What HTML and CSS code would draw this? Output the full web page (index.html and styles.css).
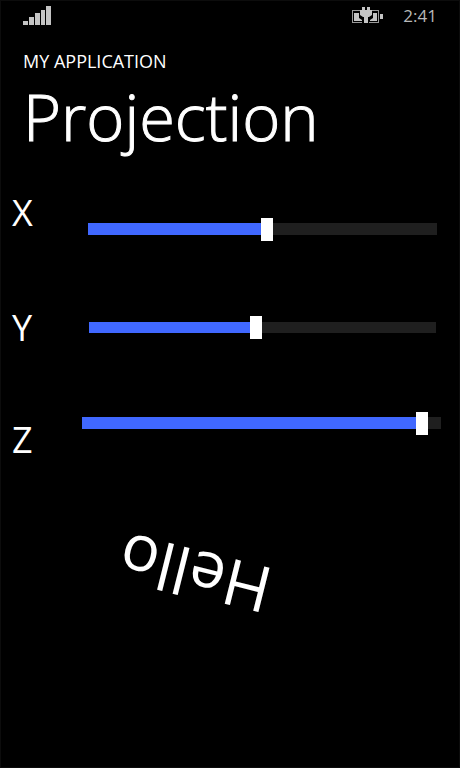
FILE: index.html
```html
<!DOCTYPE html>
<html lang="en">
<head>
<meta charset="utf-8">
<meta name="viewport" content="width=device-width, initial-scale=1">
<title>Projection</title>
<link rel="stylesheet" href="styles.css">
</head>
<body>
<div class="status">
  <svg class="signal" width="28" height="19" viewBox="0 0 28 19" aria-hidden="true">
    <path d="M0 15h5v4H0zM6 11h5v8H6zM12 7h5v12h-5zM18 4h4v15h-4zM23 0h5v19h-5z"/>
  </svg>
  <svg class="battery" width="31" height="18" viewBox="0 0 31 18" aria-hidden="true">
    <path class="shell" d="M0 4h9v1H1v11h9v1H0zM18 4h9v13H17v-1h9V5h-8z"/>
    <path d="M28 8h3v5h-3z"/>
    <path d="M2 7h5v5l3 2v1H2zM25 7h-4v5l-3 2v1h7z"/>
    <path d="M10 1h3v3h2V1h3v3h2v5l-3 2h-1v6h-4v-6h-1l-3-2V4h2z"/>
  </svg>
  <time class="clock">2:41</time>
</div>
<header class="heading">
  <p class="app-name">MY APPLICATION</p>
  <h1 class="title">Projection</h1>
</header>
<main>
  <form class="controls">
    <div class="row row-x">
      <label for="x">X</label>
      <input id="x" type="range" min="0" max="1000" value="513" style="--fill: 51.3%">
    </div>
    <div class="row row-y">
      <label for="y">Y</label>
      <input id="y" type="range" min="0" max="1000" value="480" style="--fill: 48%">
    </div>
    <div class="row row-z">
      <label for="z">Z</label>
      <input id="z" type="range" min="0" max="1000" value="963" style="--fill: 96.3%">
    </div>
  </form>
  <p class="stage"><span class="hello">Hello</span></p>
</main>
</body>
</html>
```
FILE: styles.css
```css
* {
  box-sizing: border-box;
}

body {
  margin: 0;
  min-height: 100vh;
  overflow-x: hidden;
  border: 1px solid #0c0c0c;
  background: #000;
  color: #fff;
  font-family: "Open Sans", "Noto Sans", sans-serif;
}

p,
h1 {
  margin: 0;
  font-weight: 400;
}

.status {
  display: flex;
  align-items: flex-start;
  height: 48px;
  padding: 5px 22px 0;
  color: #b8b8b8;
  fill: #c4c4c4;
}

.battery {
  margin-left: auto;
}

.shell {
  fill: #999;
}

.clock {
  margin-left: 20px;
  font-size: 17px;
  line-height: 20px;
}

.heading {
  padding: 0 22px;
}

.app-name {
  font-size: 18px;
  line-height: 24px;
}

.title {
  font-size: 65px;
  font-weight: 300;
  line-height: 86px;
  -webkit-text-stroke: 1px #fff;
}

.controls {
  padding-top: 30px;
}

.row {
  display: grid;
  grid-template-columns: 76px 1fr;
  align-items: start;
  height: 115px;
  padding: 0 22px 0 11px;
}

.row label {
  font-size: 36px;
  line-height: 48px;
}

.row input {
  --track: 12px;
  appearance: none;
  width: 100%;
  height: 24px;
  margin: 0;
  background: none;
}

.row input::-webkit-slider-runnable-track {
  height: var(--track);
  background: linear-gradient(to right, #4068ff var(--fill), #1f1f1f var(--fill));
}

.row input::-webkit-slider-thumb {
  appearance: none;
  width: 12px;
  height: 23px;
  margin-top: calc((var(--track) - 23px) / 2);
  background: #fff;
}

.row-x input {
  margin-top: 28px;
}

.row-y {
  grid-template-columns: 77px 1fr;
  height: 107px;
  padding-right: 23px;
}

.row-y input {
  --track: 11px;
  margin-top: 11px;
}

.row-z {
  grid-template-columns: 70px 1fr;
  align-items: end;
  height: 53px;
  padding-right: 18px;
}

.row-z input {
  align-self: start;
}

.stage {
  padding: 66px 117px;
}

.hello {
  display: inline-block;
  font-size: 64px;
  line-height: 88px;
  transform: rotate(194deg);
}
```
